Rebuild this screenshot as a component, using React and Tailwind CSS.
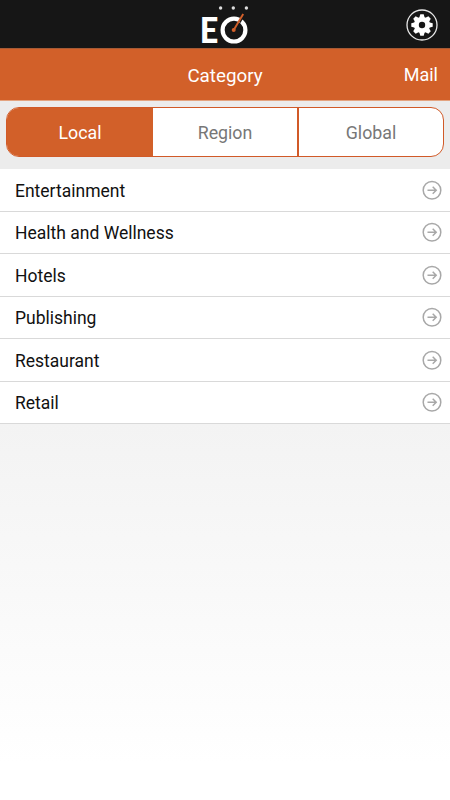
import React from "react";

const categories = ["Entertainment", "Health and Wellness", "Hotels", "Publishing", "Restaurant", "Retail"];

function Logo() {
  return (
    <svg width="54" height="52" viewBox="198 0 54 52" className="block">
      <text x="199.8" y="43" fill="#fff" fontFamily="Lato, sans-serif" fontWeight="900" fontSize="36" textLength="18.6" lengthAdjust="spacingAndGlyphs">E</text>
      <circle cx="234" cy="30.1" r="11.4" fill="none" stroke="#fff" strokeWidth="4.2" />
      <path d="M239.4 22.4L243.8 15" stroke="#161616" strokeWidth="2.4" />
      <path d="M233.6 30.2L243.2 14" stroke="#d3602a" strokeWidth="1.9" />
      <circle cx="233.7" cy="30" r="2" fill="#d3602a" />
      <circle cx="220.6" cy="8" r="1.7" fill="#ddd" />
      <circle cx="233.3" cy="8" r="1.7" fill="#ddd" />
      <circle cx="246.4" cy="8" r="1.7" fill="#ddd" />
    </svg>
  );
}

function SettingsIcon() {
  return (
    <svg width="32" height="32" viewBox="-16 -16 32 32" className="block">
      <circle r="15" fill="#151515" stroke="#e8e8e8" strokeWidth="1.3" />
      <g fill="#fff">
        {[0, 45, 90, 135].map((a) => (
          <path key={a} transform={`rotate(${a})`} d="M-2.8 -7L-1.7 -10.7H1.7L2.8 -7V7L1.7 10.7H-1.7L-2.8 7Z" />
        ))}
        <circle r="8" />
      </g>
      <circle r="3.2" fill="#151515" />
    </svg>
  );
}

function ArrowIcon() {
  return (
    <svg width="20" height="20" viewBox="0 0 20 20" fill="none" stroke="#a8a8a8" className="block">
      <circle cx="10" cy="10.3" r="8.8" strokeWidth="1.5" />
      <path d="M5.5 10.3H14M10.7 6.8L14.2 10.3L10.7 13.8" strokeWidth="1.5" />
    </svg>
  );
}

export default function App() {
  return (
    <div className="flex h-[800px] w-[450px] flex-col bg-white font-[Roboto,sans-serif]">
      <header className="grid h-12 shrink-0 grid-cols-[1fr_54px_1fr] bg-[#161616]">
        <span />
        <Logo />
        <div className="flex justify-end pt-[9px] pr-3"><SettingsIcon /></div>
      </header>
      <div className="grid h-[53px] shrink-0 grid-cols-3 items-center border-t border-b border-t-[#a65a35] border-b-[#e4a37f] bg-[#d26029] text-white">
        <span />
        <h1 className="pt-[3px] text-center text-[18.8px] leading-6">Category</h1>
        <span className="pr-3 pt-px text-right text-[18px] leading-6">Mail</span>
      </div>
      <div className="h-[68px] shrink-0 bg-[#ececec] px-1.5 pt-1.5">
        <div className="grid h-[50px] grid-cols-[146px_146px_1fr] overflow-hidden rounded-[13px] border border-[#d15a28] bg-white text-center text-[17.8px] leading-[49px] text-[#777]">
          <div className="bg-[#d26029] text-white">Local</div>
          <div className="border-r-2 border-[#d15a28]">Region</div>
          <div>Global</div>
        </div>
      </div>
      <ul className="flex h-[255px] shrink-0 flex-col bg-white text-[17.5px] text-[#111]">
        {categories.map((c) => (
          <li key={c} className="flex flex-1 items-center justify-between border-b border-[#d9d9d9] pr-2 pl-[15px]">
            <span className="pt-0.5">{c}</span>
            <ArrowIcon />
          </li>
        ))}
      </ul>
      <main className="flex-1 bg-linear-to-b from-[#f3f3f3] to-white to-90%" />
    </div>
  );
}
